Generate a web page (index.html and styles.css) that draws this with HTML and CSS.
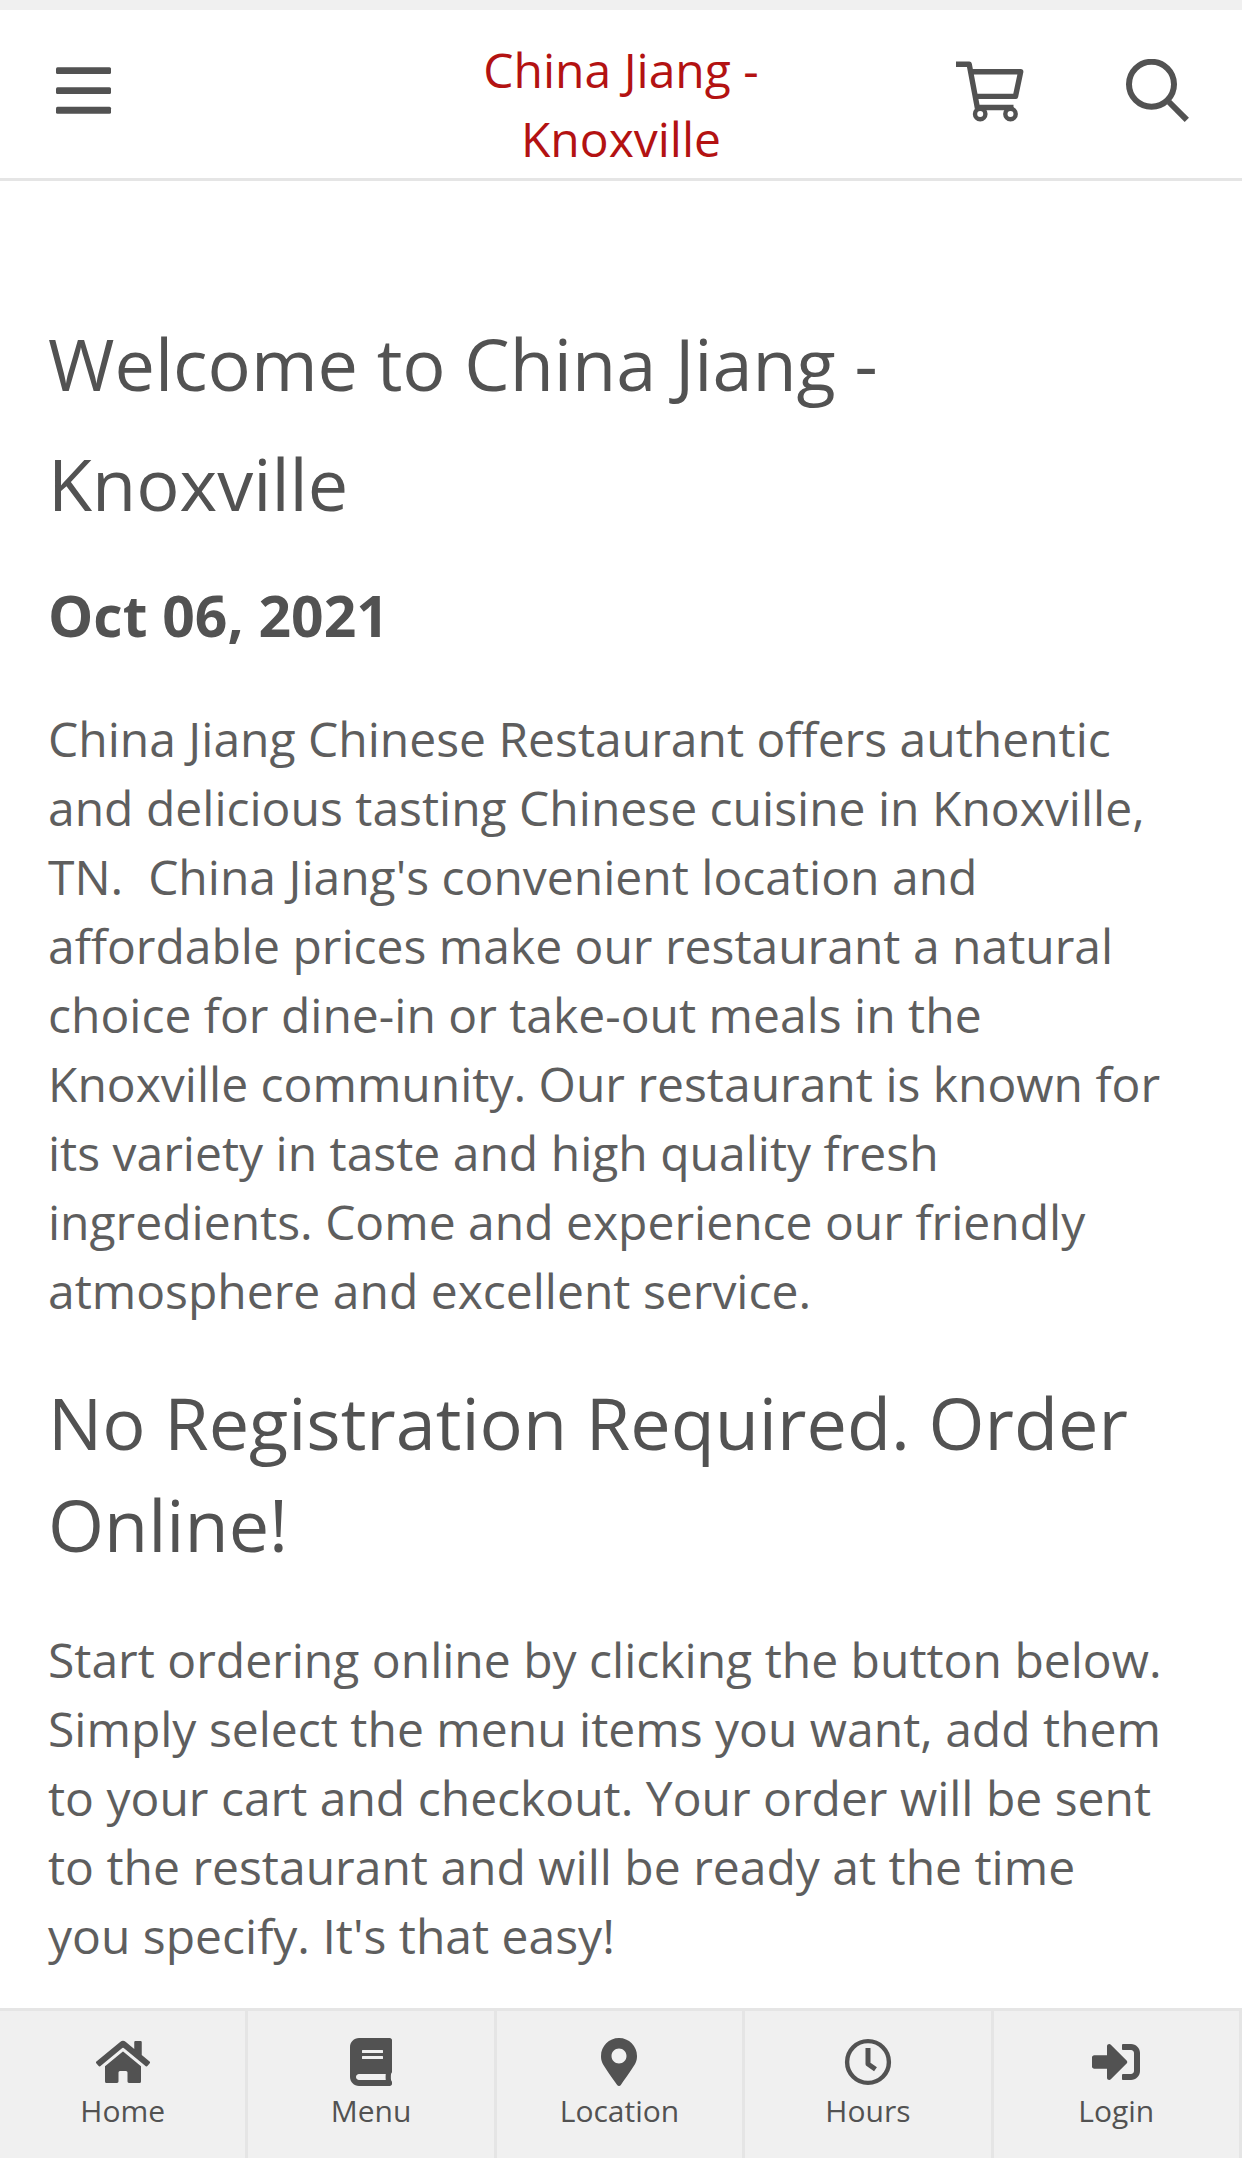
FILE: index.html
```html
<!DOCTYPE html>
<html lang="en">
<head>
    <meta charset="utf-8">
    <title>China Jiang - Knoxville</title>
    <link rel="stylesheet" href="styles.css">
</head>
<body>

<div class="page">
<header class="header">
    <a class="menu-link" aria-label="Menu">
        <svg width="56" height="48" viewBox="0 0 56 48">
            <rect y="0.300" width="55" height="6.700" rx="1.500"/>
            <rect y="20.200" width="55" height="6.700" rx="1.500"/>
            <rect y="39.800" width="55" height="6.900" rx="1.500"/>
        </svg>
    </a>
    <div class="brand">China Jiang - Knoxville</div>
    <a class="cart-link" aria-label="Cart">
        <svg width="68" height="62" viewBox="0 0 68 62" class="line">
            <path d="M0 3.300H13.200L21.500 47.500M15.500 10.800H64.700L59.500 35.400H20.500M22 46.500H57.500" stroke-width="5.400" stroke-linejoin="round"/>
            <circle cx="24.200" cy="53" r="5.200" stroke-width="4.400"/>
            <circle cx="54.500" cy="53" r="5.200" stroke-width="4.400"/>
        </svg>
    </a>
    <a class="search-link" aria-label="Search">
        <svg width="64" height="64" viewBox="0 0 64 64" class="line">
            <circle cx="25.500" cy="25.300" r="22.500" stroke-width="6"/>
            <path d="M43 43L60.800 60.800" stroke-width="6"/>
        </svg>
    </a>
</header>

<main class="content">
    <h1>Welcome to China Jiang - Knoxville</h1>
    <h3>Oct 06, 2021</h3>
    <p>China Jiang Chinese Restaurant offers authentic and delicious tasting Chinese cuisine in Knoxville, TN.&nbsp; China Jiang's convenient location and affordable prices make our restaurant a natural choice for dine-in or take-out meals in the Knoxville community. Our restaurant is known for its variety in taste and high quality fresh ingredients. Come and experience our friendly atmosphere and excellent service.</p>
    <h2>No Registration Required. Order Online!</h2>
    <p>Start ordering online by clicking the button below. Simply select the menu items you want, add them to your cart and checkout. Your order will be sent to the restaurant and will be ready at the time you specify. It's that easy!</p>
</main>

<nav class="tabs">
    <a class="tab">
        <svg width="54" height="48" viewBox="0 0 576 512"><path d="M280.370 148.260L96 300.110V464a16 16 0 0 0 16 16l112.060-.290a16 16 0 0 0 15.920-16V368a16 16 0 0 1 16-16h64a16 16 0 0 1 16 16v95.640a16 16 0 0 0 16 16.050L464 480a16 16 0 0 0 16-16V300L295.670 148.260a12.190 12.190 0 0 0-15.300 0zM571.600 251.470L488 182.560V44.050a12 12 0 0 0-12-12h-56a12 12 0 0 0-12 12v72.610L318.470 43a48 48 0 0 0-61 0L4.340 251.470a12 12 0 0 0-1.600 16.900l25.500 31A12 12 0 0 0 45.150 301l235.220-193.740a12.190 12.190 0 0 1 15.300 0L530.900 301a12 12 0 0 0 16.900-1.600l25.500-31a12 12 0 0 0-1.700-16.930z"/></svg>
        Home
    </a>
    <a class="tab">
        <svg width="42" height="48" viewBox="0 0 448 512"><path d="M448 360V24c0-13.300-10.700-24-24-24H96C43 0 0 43 0 96v320c0 53 43 96 96 96h328c13.300 0 24-10.700 24-24v-16c0-7.500-3.500-14.300-8.900-18.700-4.200-15.400-4.200-59.300 0-74.700 5.400-4.300 8.900-11.100 8.900-18.600zM128 134c0-3.300 2.700-6 6-6h212c3.300 0 6 2.700 6 6v20c0 3.300-2.700 6-6 6H134c-3.300 0-6-2.700-6-6v-20zm0 64c0-3.300 2.700-6 6-6h212c3.300 0 6 2.700 6 6v20c0 3.300-2.700 6-6 6H134c-3.300 0-6-2.700-6-6v-20zm253.400 250H96c-17.700 0-32-14.300-32-32 0-17.600 14.400-32 32-32h285.400c-1.900 17.100-1.900 46.900 0 64z"/></svg>
        Menu
    </a>
    <a class="tab">
        <svg width="36" height="48" viewBox="0 0 384 512"><path d="M172.268 501.670C26.970 291.031 0 269.413 0 192 0 85.961 85.961 0 192 0s192 85.961 192 192c0 77.413-26.970 99.031-172.268 309.670-9.535 13.774-29.930 13.773-39.464 0zM192 272c44.183 0 80-35.817 80-80s-35.817-80-80-80-80 35.817-80 80 35.817 80 80 80z"/></svg>
        Location
    </a>
    <a class="tab">
        <svg width="48" height="48" viewBox="0 0 48 48" class="line">
            <circle cx="24" cy="24" r="20.900" stroke-width="4.400"/>
            <path d="M24 10V26L31.500 31.200" stroke-width="5" stroke-linejoin="round"/>
        </svg>
        Hours
    </a>
    <a class="tab">
        <svg width="48" height="48" viewBox="0 0 512 512"><path d="M416 448h-84c-6.600 0-12-5.400-12-12v-40c0-6.600 5.400-12 12-12h84c17.700 0 32-14.300 32-32V160c0-17.700-14.300-32-32-32h-84c-6.600 0-12-5.400-12-12V76c0-6.600 5.400-12 12-12h84c53 0 96 43 96 96v192c0 53-43 96-96 96zm-47-209L201 71c-15-15-41-4.500-41 17v96H24c-13.300 0-24 10.700-24 24v96c0 13.300 10.700 24 24 24h136v96c0 21.500 26 32 41 17l168-168c9.300-9.400 9.300-24.600 0-34z"/></svg>
        Login
    </a>
</nav>
</div>

</body>
</html>
```

FILE: styles.css
```css
* {box-sizing: border-box;}
body {
    margin: 0;
    font-family: "Open Sans", sans-serif;
    font-size: 48px;
    line-height: 69px;
    color: #5e5e5e;
    background-color: #fff;
}
svg {
    display: block;
    fill: #525252;
}
svg.line {
    fill: none;
    stroke: #525252;
}
.page {
    display: flex;
    flex-direction: column;
    height: 2158px;
    overflow: hidden;
}
.header {
    display: flex;
    height: 181px;
    border-top: solid 10px #f0f0f0;
    border-bottom: solid 3px #e5e5e5;
}
.menu-link {
    width: 450px;
    padding: 57px 0 0 56px;
}
.brand {
    width: 342px;
    padding-top: 25px;
    text-align: center;
    color: #b31212;
}
.cart-link {
    width: 170px;
    margin-left: 164px;
    padding-top: 51px;
}
.search-link {padding-top: 49px;}
.content {
    flex: 1;
    padding: 122px 77px 0 48px;
}
h1, h2, h3, p {margin: 0;}
h1, h2, h3 {color: #525252;}
h1, h2 {
    font-size: 72px;
    font-weight: normal;
}
h1 {line-height: 120px;}
h2 {
    line-height: 102px;
    margin: 46px 0 50px;
}
h3 {
    margin: 32px 0 49px;
    font-size: 57px;
    line-height: 80px;
}
.tabs {
    display: grid;
    grid-template-columns: repeat(5, 1fr);
    height: 150px;
    border-top: solid 3px #e5e5e5;
    background-color: #f0f0f0;
}
.tab {
    display: flex;
    flex-direction: column;
    align-items: center;
    padding-top: 27px;
    border-right: solid 3px #e5e5e5;
    font-size: 30px;
    line-height: 49px;
    color: #525252;
}
```
